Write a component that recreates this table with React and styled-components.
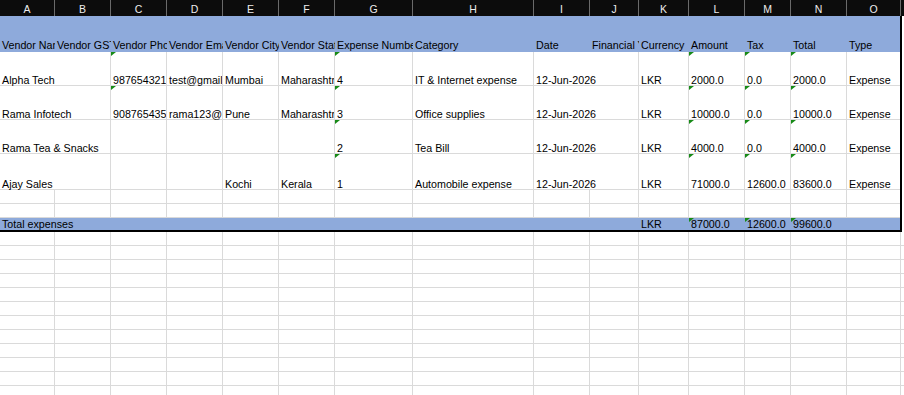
import React from 'react';
import styled, { createGlobalStyle } from 'styled-components';

const GRID = '#dadada';
const BLUE = '#8eaadb';
const WIDTHS = [55, 56, 56, 56, 56, 56, 78, 121, 56, 49, 50, 56, 46, 56];
const LETTERS = 'ABCDEFGHIJKLMNO'.split('');
const cols = (last) => WIDTHS.map((w) => `${w}px`).join(' ') + ` ${last}px`;

const Global = createGlobalStyle`
  html, body { margin: 0; padding: 0; background: #fff; }
  body { font-family: "Liberation Sans", Arial, sans-serif; overflow: hidden; }
`;

const Sheet = styled.div`
  width: 904px;
  height: 395px;
  overflow: hidden;
  background: #fff;
`;

const ColHeader = styled.div`
  display: grid;
  grid-template-columns: ${cols(54)} 1fr;
  height: 16px;
  background: #0c0c0c;
`;

const ColLetter = styled.div`
  box-sizing: border-box;
  border-right: 1px solid #6a6a6a;
  color: #ececec;
  font-size: 10.5px;
  line-height: 13px;
  padding-top: 3px;
  text-align: center;
`;

const Table = styled.div`
  box-sizing: border-box;
  width: 902px;
  border-right: 2px solid #000;
  border-bottom: 2px solid #000;
`;

const Row = styled.div`
  display: grid;
  grid-template-columns: ${(p) => p.$cols};
  box-sizing: border-box;
  height: ${(p) => p.$h}px;
  background: ${(p) => (p.$fill ? BLUE : '#fff')};
  border-bottom: ${(p) => (p.$line ? `1px solid ${GRID}` : 'none')};
`;

const Cell = styled.div`
  position: relative;
  box-sizing: border-box;
  min-width: 0;
  grid-column: span ${(p) => p.$span || 1};
  border-right: ${(p) => (p.$grid ? `1px solid ${GRID}` : 'none')};
  display: flex;
  align-items: flex-end;
  padding: 0 0 ${(p) => p.$pb || 0}px 2px;
  overflow-x: clip;
  overflow-y: visible;
  white-space: nowrap;
  font-size: 10.7px;
  line-height: 10px;
  color: #000;
`;

const Flag = styled.span`
  position: absolute;
  top: 0;
  left: 0;
  width: 0;
  height: 0;
  border-top: 4px solid #178a17;
  border-right: 5px solid transparent;
`;

const HEAD = [
  'Vendor Name', 'Vendor GST', 'Vendor Phone', 'Vendor Email', 'Vendor City',
  'Vendor State', 'Expense Number', 'Category', 'Date', 'Financial Year',
  'Currency', 'Amount', 'Tax', 'Total', 'Type',
];

const DATA = [
  {
    h: 34,
    cells: [
      { t: 'Alpha Tech', span: 2 }, { t: '9876543210', flag: 1 }, { t: 'test@gmail.com' },
      { t: 'Mumbai' }, { t: 'Maharashtra' }, { t: '4', flag: 1 }, { t: 'IT & Internet expense' },
      { t: '12-Jun-2026', span: 2 }, { t: 'LKR' }, { t: '2000.0', flag: 1 }, { t: '0.0', flag: 1 },
      { t: '2000.0', flag: 1 }, { t: 'Expense' },
    ],
  },
  {
    h: 34,
    cells: [
      { t: 'Rama Infotech', span: 2 }, { t: '9087654352', flag: 1 }, { t: 'rama123@gmail.com' },
      { t: 'Pune' }, { t: 'Maharashtra' }, { t: '3', flag: 1 }, { t: 'Office supplies' },
      { t: '12-Jun-2026', span: 2 }, { t: 'LKR' }, { t: '10000.0', flag: 1 }, { t: '0.0', flag: 1 },
      { t: '10000.0', flag: 1 }, { t: 'Expense' },
    ],
  },
  {
    h: 34,
    cells: [
      { t: 'Rama Tea & Snacks', span: 2 }, { t: '' }, { t: '' }, { t: '' }, { t: '' },
      { t: '2', flag: 1 }, { t: 'Tea Bill' }, { t: '12-Jun-2026', span: 2 }, { t: 'LKR' },
      { t: '4000.0', flag: 1 }, { t: '0.0', flag: 1 }, { t: '4000.0', flag: 1 }, { t: 'Expense' },
    ],
  },
  {
    h: 36,
    cells: [
      { t: 'Ajay Sales', span: 2 }, { t: '' }, { t: '' }, { t: 'Kochi' }, { t: 'Kerala' },
      { t: '1', flag: 1 }, { t: 'Automobile expense' }, { t: '12-Jun-2026', span: 2 }, { t: 'LKR' },
      { t: '71000.0', flag: 1 }, { t: '12600.0', flag: 1 }, { t: '83600.0', flag: 1 }, { t: 'Expense' },
    ],
  },
];

const EMPTY = LETTERS.map(() => ({ t: '' }));

const TOTAL = [
  { t: 'Total expenses', span: 10 }, { t: 'LKR' }, { t: '87000.0', flag: 1 },
  { t: '12600.0', flag: 1 }, { t: '99600.0', flag: 1 }, { t: '' },
];

const Cells = ({ cells, grid, lastGrid, pb }) =>
  cells.map((c, i) => (
    <Cell
      key={i}
      $span={c.span}
      $grid={grid && (i < cells.length - 1 || lastGrid)}
      $pb={pb}
    >
      {c.flag ? <Flag /> : null}
      {c.t}
    </Cell>
  ));

export default function App() {
  const tableCols = cols(53);
  const sheetCols = cols(54);
  return (
    <Sheet>
      <Global />
      <ColHeader>
        {LETTERS.map((l) => (
          <ColLetter key={l}>{l}</ColLetter>
        ))}
      </ColHeader>
      <Table>
        <Row $cols={tableCols} $h={36} $fill>
          <Cells cells={HEAD.map((t) => ({ t }))} pb={2} />
        </Row>
        {DATA.map((r, i) => (
          <Row key={i} $cols={tableCols} $h={r.h} $line>
            <Cells cells={r.cells} grid />
          </Row>
        ))}
        <Row $cols={tableCols} $h={14} $line>
          <Cells cells={EMPTY} grid />
        </Row>
        <Row $cols={tableCols} $h={14} $line>
          <Cells cells={EMPTY} grid />
        </Row>
        <Row $cols={tableCols} $h={12} $fill>
          <Cells cells={TOTAL} pb={1} />
        </Row>
      </Table>
      {Array.from({ length: 12 }).map((_, i) => (
        <Row key={i} $cols={sheetCols} $h={14} $line>
          <Cells cells={EMPTY} grid lastGrid />
        </Row>
      ))}
    </Sheet>
  );
}
